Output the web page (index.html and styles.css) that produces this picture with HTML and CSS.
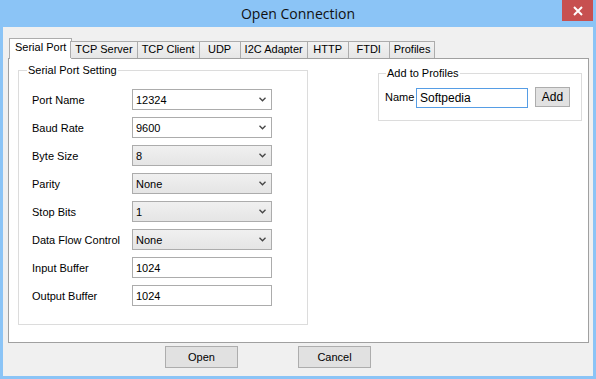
FILE: index.html
```html
<!DOCTYPE html>
<html lang="en">
<head>
    <meta charset="UTF-8">
    <title>Open Connection</title>
    <link rel="stylesheet" href="styles.css">
</head>
<body>

    <div class="window">
        <!-- Title bar -->
        <div class="titlebar">
            <span></span>
            <h1 class="title">Open Connection</h1>
            <button class="close" aria-label="Close">
                <svg width="10" height="10" viewBox="0 0 10 10">
                    <path d="M1 1 L9 9 M9 1 L1 9" stroke="#fff" stroke-width="2"/>
                </svg>
            </button>
        </div>

        <div class="client">
            <!-- Tabs -->
            <ul class="tabs">
                <li class="tab active">Serial Port</li>
                <li class="tab">TCP Server</li>
                <li class="tab">TCP Client</li>
                <li class="tab">UDP</li>
                <li class="tab">I2C Adapter</li>
                <li class="tab">HTTP</li>
                <li class="tab">FTDI</li>
                <li class="tab">Profiles</li>
            </ul>

            <div class="panel">
                <fieldset class="group serial">
                    <legend>Serial Port Setting</legend>

                    <div class="row">
                        <label>Port Name</label>
                        <div class="combo editable"><span>12324</span>
                            <svg class="chevron" width="7" height="5" viewBox="0 0 7 5"><path d="M0.5 0.8 L3.5 3.8 L6.5 0.8" fill="none" stroke="#444" stroke-width="1.3"/></svg>
                        </div>
                    </div>
                    <div class="row">
                        <label>Baud Rate</label>
                        <div class="combo editable"><span>9600</span>
                            <svg class="chevron" width="7" height="5" viewBox="0 0 7 5"><path d="M0.5 0.8 L3.5 3.8 L6.5 0.8" fill="none" stroke="#444" stroke-width="1.3"/></svg>
                        </div>
                    </div>
                    <div class="row">
                        <label>Byte Size</label>
                        <div class="combo"><span>8</span>
                            <svg class="chevron" width="7" height="5" viewBox="0 0 7 5"><path d="M0.5 0.8 L3.5 3.8 L6.5 0.8" fill="none" stroke="#444" stroke-width="1.3"/></svg>
                        </div>
                    </div>
                    <div class="row">
                        <label>Parity</label>
                        <div class="combo"><span>None</span>
                            <svg class="chevron" width="7" height="5" viewBox="0 0 7 5"><path d="M0.5 0.8 L3.5 3.8 L6.5 0.8" fill="none" stroke="#444" stroke-width="1.3"/></svg>
                        </div>
                    </div>
                    <div class="row">
                        <label>Stop Bits</label>
                        <div class="combo"><span>1</span>
                            <svg class="chevron" width="7" height="5" viewBox="0 0 7 5"><path d="M0.5 0.8 L3.5 3.8 L6.5 0.8" fill="none" stroke="#444" stroke-width="1.3"/></svg>
                        </div>
                    </div>
                    <div class="row">
                        <label>Data Flow Control</label>
                        <div class="combo"><span>None</span>
                            <svg class="chevron" width="7" height="5" viewBox="0 0 7 5"><path d="M0.5 0.8 L3.5 3.8 L6.5 0.8" fill="none" stroke="#444" stroke-width="1.3"/></svg>
                        </div>
                    </div>
                    <div class="row">
                        <label>Input Buffer</label>
                        <input class="field" type="text" value="1024">
                    </div>
                    <div class="row">
                        <label>Output Buffer</label>
                        <input class="field" type="text" value="1024">
                    </div>
                </fieldset>

                <fieldset class="group profiles">
                    <legend>Add to Profiles</legend>
                    <div class="profile-row">
                        <label>Name</label>
                        <input class="name-field" type="text" value="Softpedia">
                        <button class="btn add">Add</button>
                    </div>
                </fieldset>
            </div>

            <!-- Dialog buttons -->
            <div class="footer">
                <button class="btn dialog">Open</button>
                <button class="btn dialog">Cancel</button>
            </div>
        </div>
    </div>

</body>
</html>
```

FILE: styles.css
```css
/* Global Styles */
* {
    margin: 0;
    padding: 0;
    box-sizing: border-box;
}

body {
    font-family: 'Liberation Sans', Arial, sans-serif;
    font-size: 11px;
    color: #000;
    background: #8bc4f6;
}

/* Window frame */
.window {
    width: 596px;
    height: 379px;
    background: #8bc4f6;
    padding: 0 3px 3px;
    display: flex;
    flex-direction: column;
}

.titlebar {
    height: 27px;
    display: grid;
    grid-template-columns: 1fr auto 1fr;
    align-items: start;
}

.title {
    font-family: 'Open Sans', sans-serif;
    font-size: 14px;
    font-weight: normal;
    line-height: 27px;
    color: #111;
}

.close {
    justify-self: end;
    width: 31px;
    height: 21px;
    background: #c75050;
    border: none;
    display: flex;
    justify-content: center;
    align-items: center;
}

.client {
    flex: 1;
    background: #f0f0f0;
    padding: 11px 4px 0 5px;
    display: flex;
    flex-direction: column;
}

/* Tabs */
.tabs {
    list-style: none;
    display: flex;
    align-items: flex-end;
    height: 20px;
    padding-left: 1px;
    position: relative;
    z-index: 1;
}

.tab {
    min-width: 42px;
    height: 17px;
    line-height: 15px;
    padding: 0 4px;
    margin-left: -1px;
    border: 1px solid #acacac;
    border-bottom: none;
    background: linear-gradient(#f2f2f2, #e6e6e6);
    text-align: center;
    white-space: nowrap;
}

.tab.active {
    height: 21px;
    line-height: 17px;
    margin-left: 0;
    margin-right: -1px;
    margin-bottom: -1px;
    padding: 0 5px;
    background: #fff;
}

/* Tab page */
.panel {
    flex: 1;
    background: #fff;
    border: 1px solid #a0a0a0;
    display: flex;
    justify-content: space-between;
    align-items: flex-start;
    padding: 5px 6px 0 9px;
}

.group {
    border: 1px solid #dcdcdc;
}

.group legend {
    line-height: 13px;
    padding: 0 1px;
}

.serial {
    width: 290px;
    padding: 12px 0 18px 13px;
}

.serial legend {
    margin-left: -5px;
}

.row {
    display: flex;
    align-items: center;
    height: 21px;
    margin-bottom: 7px;
}

.row:last-child {
    margin-bottom: 0;
}

.row label {
    width: 100px;
}

.combo, .field {
    width: 140px;
    height: 21px;
    border: 1px solid #acacac;
    font: inherit;
}

.combo {
    display: flex;
    align-items: center;
    justify-content: space-between;
    padding: 0 5px 0 3px;
    background: linear-gradient(#f0f0f0, #e5e5e5);
}

.combo.editable {
    background: #fff;
}

.field {
    padding: 0 3px;
    background: #fff;
}

/* Add to Profiles */
.profiles {
    width: 204px;
    margin-top: 3px;
    padding: 7px 10px 13px 6px;
}

.profiles legend {
    margin-left: 1px;
}

.profile-row {
    display: flex;
    align-items: center;
    height: 20px;
}

.profile-row label {
    width: 31px;
}

.name-field {
    width: 112px;
    height: 20px;
    border: 1px solid #569de5;
    padding: 0 3px;
    font: inherit;
    font-size: 12px;
    margin-top: 2px;
}

.btn {
    background: #e1e1e1;
    border: 1px solid #adadad;
    font: inherit;
    color: #000;
}

.add {
    width: 35px;
    height: 20px;
    margin-left: 7px;
    font-size: 12px;
}

/* Footer buttons */
.footer {
    height: 33px;
    display: flex;
    gap: 60px;
    padding: 3px 0 0 157px;
}

.dialog {
    width: 73px;
    height: 22px;
}
```
